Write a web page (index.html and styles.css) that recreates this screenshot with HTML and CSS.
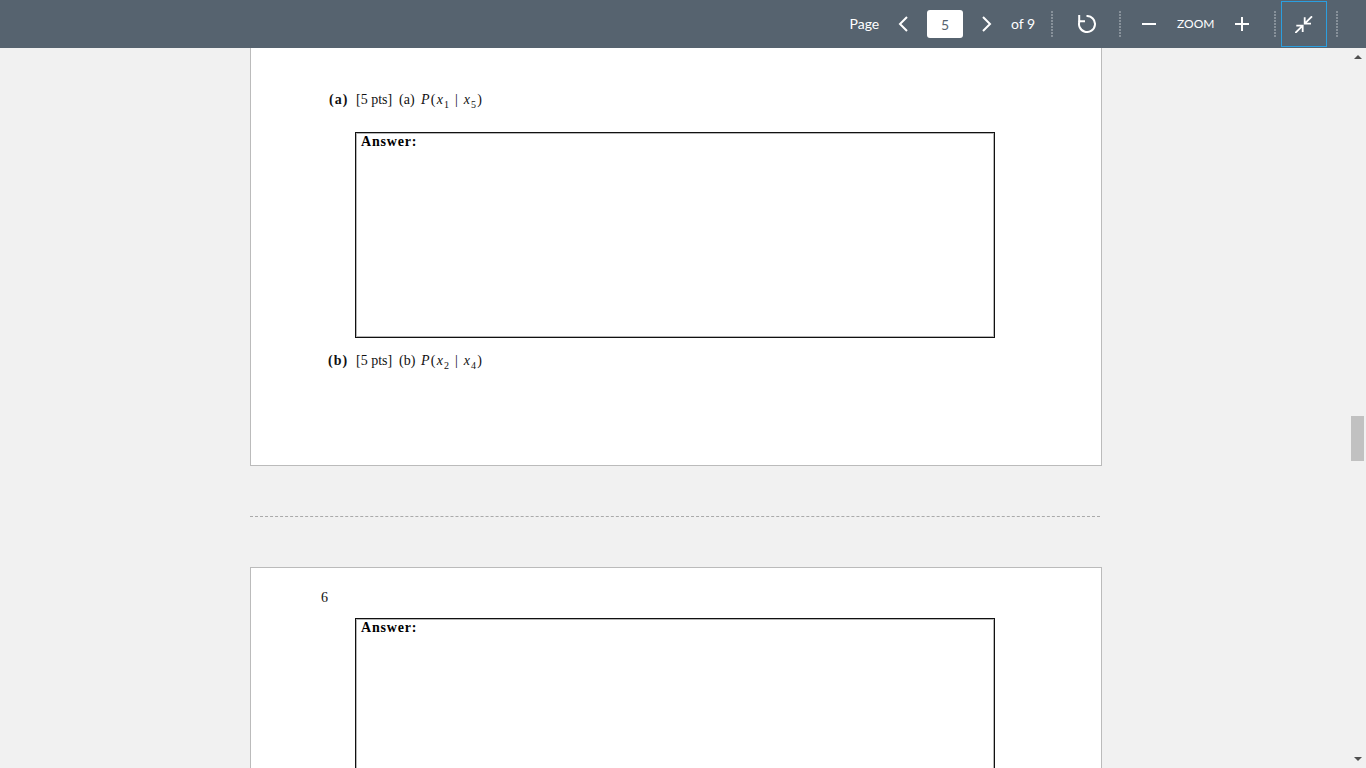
FILE: index.html
```html
<!DOCTYPE html>
<html lang="en">
<head>
<meta charset="utf-8">
<title>Document viewer</title>
<link rel="stylesheet" href="styles.css">
</head>
<body>
<header class="toolbar">
  <span class="label page-label">Page</span>
  <svg class="chev chev-prev" viewBox="0 0 10 16"><path d="M9 1 2 8l7 7"/></svg>
  <input class="page-input" value="5" aria-label="Page">
  <svg class="chev chev-next" viewBox="0 0 10 16"><path d="m1 1 7 7-7 7"/></svg>
  <span class="label of-label">of 9</span>
  <i class="sep sep-a"></i>
  <svg class="rotate" viewBox="0 0 18 18"><path d="M8.5 1A8 8 0 1 1 1.8 5.5"/><path d="M1.2 0V6.2H7"/></svg>
  <i class="sep sep-b"></i>
  <svg class="minus" viewBox="0 0 14 14"><path d="M0 7h14"/></svg>
  <span class="zoom-label">ZOOM</span>
  <svg class="plus" viewBox="0 0 14 14"><path d="M0 7h14M7 0v14"/></svg>
  <i class="sep sep-c"></i>
  <button class="fit-btn" aria-label="Exit full screen">
    <svg viewBox="0 0 18 17"><path d="M9.7 1.3V7.7H16M9.7 7.7 17 .3"/><path d="M7.7 16V9.7H1.3M7.7 9.7 .3 17"/></svg>
  </button>
  <i class="sep sep-d"></i>
</header>
<div class="viewer">
  <main class="pages">
    <section class="page page-first">
      <p class="line line-a"><b class="item">(a)</b><span class="pts">[5 pts]</span><span class="sub-label">(a)</span><span class="math"><i>P</i>(<i>x</i><sub>1</sub> | <i>x</i><sub>5</sub>)</span></p>
      <div class="answer answer-short"><b>Answer:</b></div>
      <p class="line line-b"><b class="item">(b)</b><span class="pts">[5 pts]</span><span class="sub-label">(b)</span><span class="math"><i>P</i>(<i>x</i><sub>2</sub> | <i>x</i><sub>4</sub>)</span></p>
    </section>
    <hr class="divider">
    <section class="page page-second">
      <p class="page-number">6</p>
      <div class="answer answer-tall"><b>Answer:</b></div>
    </section>
  </main>
  <aside class="scrollbar">
    <span class="arrow arrow-up"></span>
    <span class="thumb"></span>
    <span class="arrow arrow-down"></span>
  </aside>
</div>
</body>
</html>
```
FILE: styles.css
```css
html, body { margin: 0; height: 100%; overflow: hidden; }
body { display: flex; flex-direction: column; background: #f1f1f1; font-family: "Liberation Serif", "Times New Roman", serif; }

.toolbar { flex: 0 0 48px; height: 48px; display: flex; align-items: center; background: #56636f; color: #fff; font-family: Lato, sans-serif; box-sizing: border-box; padding-left: 849.5px; }
.label { font-size: 14px; line-height: 20px; }
.page-label { width: 30.5px; }
.chev { width: 10px; height: 16px; fill: none; stroke: #fff; stroke-width: 2; }
.chev-prev { margin-left: 18px; }
.page-input { width: 36px; height: 28px; margin-left: 19px; box-sizing: border-box; border: 0; border-radius: 3px; padding: 0; text-align: center; background: #fff; color: #56636f; font: 14px Lato, sans-serif; }
.chev-next { margin-left: 19px; }
.of-label { margin-left: 19px; width: 25px; white-space: nowrap; }
.sep { width: 2px; height: 26px; background: repeating-linear-gradient(#87919a 0 2px, transparent 2px 3px); }
.sep-a { margin-left: 15px; }
.rotate { width: 18px; height: 18px; margin-left: 25px; fill: none; stroke: #fff; stroke-width: 2; }
.sep-b { margin-left: 23px; }
.minus { width: 14px; height: 14px; margin-left: 21px; stroke: #fff; stroke-width: 2; }
.zoom-label { width: 37px; margin-left: 21px; font-size: 12px; line-height: 16px; white-space: nowrap; }
.plus { width: 14px; height: 14px; margin-left: 21px; stroke: #fff; stroke-width: 2; }
.sep-c { margin-left: 25px; }
.fit-btn { width: 46px; height: 46px; margin-left: 5px; box-sizing: border-box; padding: 0; border: 1px solid #2b9fe0; background: transparent; display: flex; align-items: center; justify-content: center; }
.fit-btn svg { width: 18px; height: 17px; fill: none; stroke: #fff; stroke-width: 1.8; }
.sep-d { margin-left: 9px; }

.viewer { flex: 1; min-height: 0; display: flex; overflow: hidden; }
.pages { flex: 1; padding-left: 250px; min-width: 0; }
.scrollbar { flex: 0 0 15px; display: flex; flex-direction: column; align-items: flex-start; }
.thumb { width: 13px; height: 45px; margin-top: 357px; background: #c1c1c1; }
.arrow { width: 0; height: 0; margin-left: 3px; border-left: 4px solid transparent; border-right: 4px solid transparent; }
.arrow-up { margin-top: 7px; border-bottom: 4px solid #505050; }
.arrow-down { margin-top: 296px; border-top: 4px solid #505050; }

.page { width: 852px; box-sizing: border-box; background: #fff; border: 1px solid #bbb; color: #111; }
.page-first { height: 418px; border-top: 0; padding-top: 43px; }
.page-second { height: 260px; padding-top: 21px; }
.divider { width: 850px; height: 0; margin: 50px 0; border: 0; border-top: 1px dashed #aaa; }

.line { margin: 0; height: 18px; font-size: 14px; line-height: 18px; white-space: nowrap; display: flex; }
.line-a { padding-left: 78px; }
.line-b { margin-top: 14px; padding-left: 77px; }
.item { width: 27px; letter-spacing: 1px; }
.pts { width: 43px; }
.sub-label { width: 22px; }
.line-b .item { width: 28px; }
.math { letter-spacing: 1.2px; }
sub { font-size: 10px; line-height: 0; }

.answer { width: 640px; margin-left: 104px; box-sizing: border-box; border: 1px solid #111; box-shadow: inset 0 0 0 1px #b5b5b5; padding: 1px 5px 0; font-size: 14px; line-height: 16px; letter-spacing: .8px; color: #000; }
.answer-short { height: 206px; margin-top: 23px; }
.answer-tall { height: 240px; margin-top: 11px; }
.page-number { margin: 0 0 0 70px; height: 18px; font-size: 14px; line-height: 18px; }
```
